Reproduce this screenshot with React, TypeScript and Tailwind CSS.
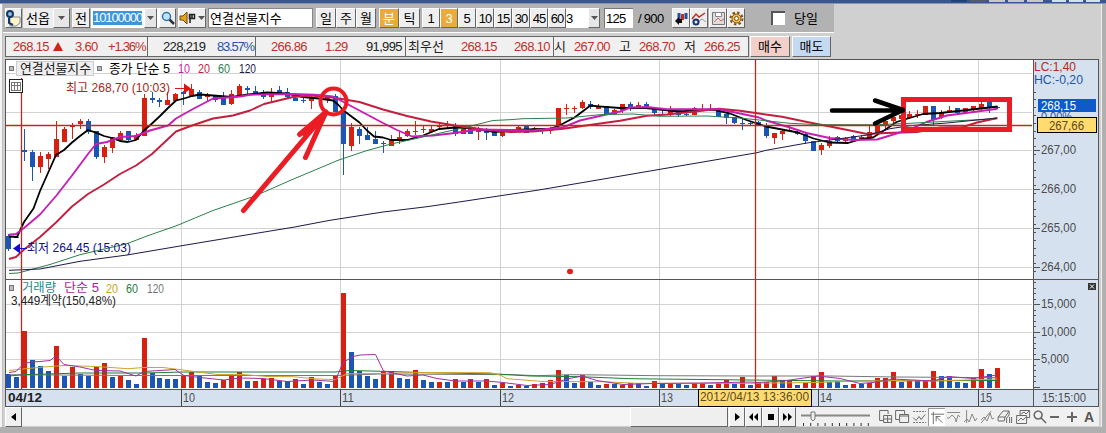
import React from "react";

type Candle = [string, number, number, number, number];

// [color, high, body top, body bottom, low], in thirds of a pixel below the pane header
const candles: Candle[] = [
  ["b", 528, 534, 573, 578], ["b", 537, 537, 538, 538], ["b", 213, 276, 283, 308], ["b", 276, 282, 326, 368], ["r", 283, 294, 326, 344],
  ["r", 282, 289, 303, 332], ["r", 190, 243, 296, 296], ["r", 207, 212, 251, 251], ["r", 195, 204, 208, 243], ["r", 183, 190, 197, 212],
  ["b", 183, 189, 221, 228], ["b", 219, 219, 296, 302], ["r", 261, 267, 296, 314], ["r", 237, 237, 269, 284], ["r", 220, 225, 245, 245],
  ["b", 219, 219, 245, 250], ["r", 226, 232, 245, 245], ["r", 108, 120, 234, 234], ["b", 103, 120, 127, 135], ["b", 120, 125, 132, 146],
  ["r", 103, 126, 140, 140], ["r", 105, 108, 128, 130], ["b", 100, 103, 108, 140], ["r", 78, 92, 114, 114], ["b", 96, 101, 123, 123],
  ["r", 104, 113, 115, 130], ["b", 110, 115, 127, 132], ["b", 102, 118, 140, 140], ["r", 97, 108, 137, 140], ["r", 78, 84, 115, 115],
  ["b", 84, 90, 97, 109], ["b", 85, 98, 104, 108], ["b", 97, 101, 116, 122], ["r", 90, 101, 116, 132], ["b", 84, 97, 104, 106],
  ["b", 91, 101, 116, 120], ["b", 115, 120, 128, 128], ["b", 120, 126, 128, 134], ["r", 115, 120, 128, 152], ["r", 115, 120, 124, 128],
  ["r", 113, 115, 126, 134], ["b", 107, 113, 162, 162], ["b", 150, 158, 258, 350], ["r", 196, 207, 264, 278], ["b", 207, 213, 234, 257],
  ["b", 207, 231, 245, 245], ["b", 219, 243, 258, 258], ["b", 250, 256, 258, 285], ["r", 231, 243, 264, 264], ["r", 223, 237, 245, 257],
  ["r", 213, 219, 234, 238], ["r", 189, 219, 221, 231], ["r", 202, 213, 215, 225], ["r", 202, 213, 222, 226], ["r", 198, 204, 208, 214],
  ["r", 188, 197, 205, 210], ["b", 196, 202, 227, 234], ["r", 205, 207, 227, 227], ["b", 205, 212, 227, 227], ["r", 207, 212, 222, 245],
  ["b", 210, 218, 224, 245], ["b", 215, 219, 234, 234], ["r", 213, 219, 234, 238], ["r", 213, 215, 220, 222], ["r", 200, 206, 216, 216],
  ["b", 200, 203, 225, 225], ["r", 207, 211, 214, 216], ["b", 210, 215, 219, 228], ["r", 207, 212, 219, 228], ["r", 150, 150, 200, 214],
  ["r", 138, 150, 153, 170], ["r", 143, 150, 153, 165], ["r", 126, 132, 151, 152], ["b", 130, 138, 147, 152], ["r", 138, 144, 152, 153],
  ["b", 144, 144, 172, 172], ["r", 152, 156, 169, 170], ["r", 138, 138, 157, 164], ["b", 132, 138, 147, 158], ["r", 132, 142, 150, 152],
  ["b", 132, 138, 152, 152], ["b", 148, 150, 164, 172], ["b", 150, 152, 154, 167], ["r", 144, 156, 170, 174], ["b", 152, 156, 170, 176],
  ["b", 163, 168, 170, 175], ["r", 148, 151, 170, 172], ["r", 138, 152, 154, 155], ["r", 138, 152, 154, 158], ["b", 150, 152, 177, 178],
  ["b", 167, 169, 180, 197], ["b", 176, 178, 196, 197], ["b", 182, 195, 197, 215], ["b", 190, 195, 197, 200], ["b", 190, 192, 202, 203],
  ["b", 194, 203, 234, 239], ["r", 224, 226, 241, 258], ["r", 213, 219, 228, 245], ["r", 205, 217, 219, 220], ["b", 212, 221, 228, 230],
  ["b", 222, 227, 250, 258], ["b", 249, 249, 278, 278], ["r", 255, 262, 277, 291], ["r", 233, 248, 263, 270], ["b", 235, 238, 250, 255],
  ["r", 238, 240, 250, 252], ["b", 230, 234, 245, 247], ["r", 232, 238, 245, 247], ["r", 205, 221, 240, 242], ["r", 196, 203, 227, 228],
  ["r", 177, 190, 202, 215], ["r", 170, 176, 190, 205], ["r", 165, 172, 184, 190], ["r", 160, 168, 180, 184], ["r", 155, 168, 170, 180],
  ["r", 144, 144, 170, 170], ["b", 144, 144, 186, 202], ["r", 156, 162, 178, 182], ["r", 143, 155, 158, 166], ["b", 150, 150, 164, 168],
  ["r", 150, 150, 164, 165], ["r", 144, 144, 157, 160], ["r", 130, 138, 152, 155], ["b", 132, 132, 147, 165], ["b", 144, 146, 148, 152],
];

// bar tops, same unit, the base line is at 339
const volumes =
  "b297 b306 r168 b255 b272 b288 r213 b302 r276 b296 b303 r276 r264 b306 r303 b315 b327 r189 b293 b309 b312 b312 r303 r290 b303 " +
  "b321 b324 r315 r303 r291 b318 r318 r312 r309 b318 b318 r313 b327 r306 b320 b327 r303 r54 b231 b288 b303 b312 r288 r288 b309 " +
  "b312 r286 b315 b321 r321 b321 r313 b322 r312 b320 r312 b330 r324 b333 r330 b333 r327 r324 r315 r285 b300 b323 r300 b320 b330 " +
  "r327 b327 r330 r324 b325 b333 r318 b327 r326 b327 b330 r325 r324 b329 r324 r315 b327 r307 b330 r321 r321 r303 b315 r315 b330 " +
  "r323 r303 r291 b320 b319 b330 r327 b327 r324 r309 r309 r291 b321 r319 b319 r319 r288 b303 b303 b320 b324 r309 r282 b297 r279";

const ma = {
  ma5: "9,236.5 17,237 24,222 33.5,208.5 40,191 48,173 56,155 64,150 72,142.5 80,136 88,130 96,132.7 104,136 112,138 120,141 128,142 136,140 144,130.5 152,123.5 160,116 168,108 176,100.5 184,98.5 192,96 200,94.5 213,95.5 232,97 248,94.5 267,92.5 287,93.5 303,97 319,98.5 333,100.5 338,104.5 343.5,110.5 359.5,122.5 367,130.5 374,136.5 383,137.5 391,140 407,140 423,135.5 439,129 455,127.5 471,128 495,132 520,129.7 550.5,128.7 558.5,126 574.5,117.5 590.5,105.5 598.5,106.3 620,108 646,108 678.5,111.5 713,109.5 730,113.5 746.5,120 757,123.5 766,126.5 782,129.5 798,132.5 813.5,138.5 829.5,142.5 848,143 861.5,139 873,137.5 885.5,129.5 896.5,122 909.5,118 923,114 940,113 963,110.5 989.5,107.5 997.5,106.5",
  ma10: "9,234.7 16,234 24,228 40,214.5 56,196 72,175.5 88,154 96,144 107,142 120,137 136,136 150,130.5 168,125.5 176,118.5 192,109.5 213,98.5 240,96.5 250,94.7 293,94 315,94.7 333,96.5 343.5,102 359.5,110.5 383,123 397,130 412,136.5 433,135.5 455,133 477,129.5 510,130 533,130.5 563,127.3 580,120.5 603,115.3 620,111.5 630.5,107.5 647,107 667,109.3 719,109.3 740,113.5 759,117.5 766,120.5 790,127.5 806.5,133 829.5,138 853,140 877,139.5 890,135.5 909.5,129.5 926.5,122 947,115.5 973.5,112 997.5,108.7",
  ma20: "9,259 16,257 24,249.5 40,237 56,222.5 72,206.5 88,194 104,184.5 120,174 136,165.5 152,154 176,131.5 192,125.5 213,118.5 233,115.5 250,110.5 264,104 293,97 311,95.5 333,97.5 359.5,102 383,109.5 407,116 431,121.5 455,125.5 483,129.5 510,132 533,131.5 563,128.7 593,124.5 620,120.7 647,115.7 667,114.5 695,111.5 719,108.7 740,110.7 759,113.5 782,116.7 807,122 830,126.5 850,130.5 867,134 886,133 917,132 940,127.5 963,127 977,122.5 997.5,118",
  ma60: "9,273.5 18,273 50,264.5 80,254.7 127,243.7 147,236 177,225.5 213,210.5 252,197 267,190.7 290,180.5 338,160.3 367,150.5 391,144 423,137 455,129.7 471,126 493,120.5 510,119.7 523,118.7 567,118 600,114.7 633,114 660,116.3 707,116 740,118 759,120 790,123.3 820,124.7 877,124.7 910,123.3 947,121.3 997,118.7",
  ma120: "9,270.3 40,269 80,261.3 127,255 180,246 260,232.7 293,227.3 330,220.3 383,212 427,206.7 457,202.3 510,194.3 537,190.3 580,183 660,169.3 707,161.3 757,152.7 766,150.3 807,143 840,138.7 870,134.7 890,128.7 910,125.7 947,123 997,118",
};

const vma = {
  v5: "9,372.5 16,371.5 24,363.5 32,362 40,361.5 50,360.5 56,356 64,364.5 80,367 96,370.5 120,371 136,376 144,371.5 175,369.5 184,375.5 200,377.5 224,380 240,378 263,378.5 287,381.5 313,380 335,381.5 343,362.5 353,356.5 360,355 375.5,354.5 383.5,371 407,376 423,375 437,378.5 455,381 487,381 503,382.5 527,385.5 550,384.5 567,379 582,376 597,380.5 623,384.5 653,383.5 703,383 750,382 758,382.5 783,381 818,376 840,378.5 860,383.5 873,382.5 893,379 933,381 948,376.5 973,378.5 997,375",
  v20: "9,370.5 23,369 47,366.7 64,365.5 96,366.5 128,368.7 144,367.5 163,367.5 187,370.5 217,374.5 243,374.5 267,376.5 293,376.7 313,378.7 335,379.7 347,373.7 380,373.5 420,372.5 490,372.7 500,375 507,378.7 543,381.5 603,381.7 637,383.3 750,383.3 813,382.5 840,381.7 893,380.5 933,381 997,379",
  v60: "9,376 24,374.7 80,373 144,373 184,372 335,372 350,370.5 390,371.5 420,372.5 497,374 530,376 580,376.7 630,378.7 720,379.7 840,381 997,380.5",
  v120: "9,374.7 133,375.5 337,375.5 380,374 513,374.7 537,375.7 570,374.7 603,375 657,375.7 750,376 830,376 897,377 997,377.7",
};

const RED = "#d62010";
const BLUE = "#1b56b5";
const barX = (i: number) => Math.round(24.4 + 7.975 * (i - 2) - 2.5);
const py = (v: number) => Math.round(58 + v / 3);

interface LabelProps {
  x: number;
  y: number;
  w: number;
  fill?: string;
  size?: number;
  bold?: boolean;
  children: string;
}

const Label = ({ x, y, w, fill = "#222", size = 13, bold, children }: LabelProps) => (
  <text x={x} y={y} textLength={w} lengthAdjust="spacingAndGlyphs" fill={fill} fontSize={size} fontWeight={bold ? 700 : 400}>
    {children}
  </text>
);

const Btn = ({ className = "", children }: { className?: string; children?: React.ReactNode }) => (
  <div className={`flex h-[20px] shrink-0 items-center justify-center border border-t-white border-l-white border-r-[#666] border-b-[#666] ${className}`}>
    {children}
  </div>
);

const Down = () => (
  <svg width="7" height="4" viewBox="0 0 7 4"><path d="M0 0h7L3.5 4z" fill="#555" /></svg>
);

const Plot = () => (
  <svg width="1028" height="330" viewBox="5 59 1028 330" className="block bg-white">
    <g stroke="#d2d2d2" shapeRendering="crispEdges">
      {[73.5, 112.5, 150.5, 189.5, 228.5, 267.5, 304.5, 332.5, 359.5].map((y) => <line key={y} x1="6" x2="1032" y1={y} y2={y} />)}
      {[181.5, 340.5, 500.5, 659.5, 818.5, 978.5].map((x) => <line key={x} x1={x} x2={x} y1="60" y2="389" />)}
    </g>

    <g shapeRendering="crispEdges">
      {candles.map(([c, hi, top, bottom, lo], i) => (
        <g key={i} fill={c === "r" ? RED : BLUE}>
          <rect x={barX(i) + 2} y={py(hi)} width="1" height={Math.max(1, py(lo) - py(hi))} />
          <rect x={barX(i)} y={py(top)} width="5" height={Math.max(1, py(bottom) - py(top))} />
        </g>
      ))}
      {volumes.split(" ").map((v, i) => {
        const h = Math.round((339 - Number(v.slice(1))) / 3);
        return <rect key={i} x={barX(i)} y={388 - h} width="5" height={h} fill={v[0] === "r" ? RED : BLUE} />;
      })}
    </g>

    <g fill="none" strokeLinejoin="round">
      <polyline points={ma.ma5} stroke="#000" strokeWidth="1.8" />
      <polyline points={ma.ma20} stroke="#c41e3f" strokeWidth="1.9" />
      <polyline points={ma.ma10} stroke="#c81eb4" strokeWidth="1.9" />
      <polyline points={ma.ma60} stroke="#2c7f4c" />
      <polyline points={ma.ma120} stroke="#1c1a4a" />
      <polyline points={vma.v120} stroke="#777" />
      <polyline points={vma.v60} stroke="#1f7d3c" />
      <polyline points={vma.v20} stroke="#cda52b" />
      <polyline points={vma.v5} stroke="#a030a0" />
    </g>

    {/* cursor and base price */}
    <g fill="none" stroke="#c0281c" strokeWidth="1.3">
      <polyline points="21.5,78 21.5,389" />
      <polyline points="6,125.5 1032,125.5" />
      <polyline points="755.5,60 755.5,389" />
    </g>
    <g fill="#555">
      <rect x="5" y="59" width="1" height="330" />
      <rect x="5" y="59" width="1028" height="1" />
      <rect x="5" y="279" width="1028" height="1" />
    </g>

    <g fill="#bbb" stroke="#777" shapeRendering="crispEdges">
      <rect x="9.5" y="66.5" width="4" height="4" />
      <rect x="97.5" y="66.5" width="4" height="4" />
      <rect x="9.5" y="285.5" width="4" height="5" />
      <rect x="16.5" y="61.5" width="77" height="14" fill="#eee" stroke="#ccc" />
    </g>
    <Label x={20} y={73} w={71}>연결선물지수</Label>
    <Label x={109} y={73} w={61} fill="#000">종가 단순 5</Label>
    <Label x={178} y={73} w={12} fill="#c81eb4">10</Label>
    <Label x={198} y={73} w={12} fill="#c41e3f">20</Label>
    <Label x={218} y={73} w={12} fill="#2c7f4c">60</Label>
    <Label x={239} y={73} w={17} fill="#1c1a4a">120</Label>
    <g stroke="#222" fill="#fff" shapeRendering="crispEdges">
      <rect x="9.5" y="79.5" width="13" height="13" />
      <path d="M11.5 82.5h9v8h-9zM11.5 85.5h9M14.5 82.5v8M17.5 82.5v8" stroke="#777" />
    </g>
    <Label x={66} y={92} w={104} fill="#b02318">최고 268,70 (10:03)</Label>
    <path d="M175 88.5h10" stroke="#d81818" />
    <path d="M184 83.5l7 5-7 5z" fill="#e01010" />
    <Label x={27} y={252} w={104} fill="#10108c">최저 264,45 (15:03)</Label>
    <path d="M19 248.5h8" stroke="#1010c0" />
    <path d="M20 243.5l-7 5 7 5z" fill="#1010c0" />

    <Label x={22} y={292} w={34} fill="#2a8588" size={12}>거래량</Label>
    <Label x={64} y={292} w={35} fill="#a81e9c" size={12}>단순 5</Label>
    <Label x={106} y={293} w={12} fill="#c8a422">20</Label>
    <Label x={126} y={293} w={12} fill="#1f7d3c">60</Label>
    <Label x={147} y={293} w={17} fill="#777">120</Label>
    <Label x={11} y={305} w={105} size={12}>3,449계약(150,48%)</Label>

    {/* hand-drawn marks */}
    <g fill="none" stroke="#ec1c24" strokeLinecap="round" strokeLinejoin="round">
      <circle cx="333.5" cy="101.5" r="13" strokeWidth="4" />
      <path d="M243.5 210.5L326 113" strokeWidth="5" />
      <path d="M299.5 134.5L326 112L305.5 157.5" strokeWidth="5" />
      <path d="M304 134L325 114L312 142" strokeWidth="4" />
      <rect x="903.5" y="99.5" width="106" height="30" strokeWidth="5" strokeLinejoin="miter" />
    </g>
    <ellipse cx="570" cy="271.5" rx="3" ry="2.7" fill="#e02020" />
    <path d="M832 110.5H903M875 100.5L903 110L875 123.5" fill="none" stroke="#000" strokeWidth="4.5" strokeLinecap="round" strokeLinejoin="round" />
  </svg>
);

const Axis = () => (
  <svg width="66" height="330" viewBox="1033 59 66 330" className="block bg-[#d6e1ef]">
    <g stroke="#555" shapeRendering="crispEdges">
      <path d="M1033 59.5h66M1033 279.5h66M1033.5 59v330M1098.5 59v330" fill="none" />
      {Array.from({ length: 24 }, (_, i) => <line key={i} x1="1034" x2="1036" y1={92 + i * 7.8} y2={92 + i * 7.8} />)}
      {Array.from({ length: 20 }, (_, i) => <line key={i} x1="1034" x2="1036" y1={282.5 + i * 5.5} y2={282.5 + i * 5.5} />)}
      {[150.5, 189.5, 228.5, 267.5, 304.5, 332.5, 359.5, 387.5].map((y) => <line key={y} x1="1034" x2="1040" y1={y} y2={y} />)}
    </g>
    <Label x={1034} y={71} w={42} fill="#b8281e" size={12}>LC:1,40</Label>
    <Label x={1034} y={84} w={49} fill="#1b56a5" size={12}>HC:-0,20</Label>
    <Label x={1041} y={121} w={31} fill="#1b56a5" size={12}>0,00%</Label>
    <rect x="1038" y="99" width="58" height="13" fill="#1059c8" />
    <Label x={1041} y={110} w={35} fill="#fff" size={12}>268,15</Label>
    <rect x="1037.5" y="117.5" width="59" height="15" fill="#ffdb70" stroke="#000" />
    <Label x={1049} y={130} w={35} fill="#5a4a20">267,66</Label>
    {["267,00", "266,00", "265,00", "264,00"].map((t, i) => (
      <Label key={t} x={1041} y={154 + i * 39} w={35} fill="#4c4c4c">{t}</Label>
    ))}
    <Label x={1041} y={308} w={35} fill="#4c4c4c">15,000</Label>
    <Label x={1041} y={336} w={35} fill="#4c4c4c">10,000</Label>
    <Label x={1041} y={363} w={28} fill="#4c4c4c">5,000</Label>
    <rect x="1088" y="283" width="8" height="7" fill="#333" />
    <path d="M1090 284.5l4 4M1094 284.5l-4 4" stroke="#fff" />
  </svg>
);

const hours: [string, number][] = [["10", 181], ["11", 340], ["12", 500], ["13", 659], ["14", 818], ["15", 978]];

const TimeAxis = () => (
  <svg width="1094" height="18" viewBox="5 389 1094 18" className="block bg-[#d6e1ef]">
    <path d="M5 389.5h1094M5 406.5h1094M5.5 389v18M1033.5 389v18M1098.5 389v18" stroke="#555" shapeRendering="crispEdges" />
    <Label x={8} y={402} w={34} bold>04/12</Label>
    {hours.map(([h, x]) => (
      <g key={h}>
        <path d={`M${x + 0.5} 389v17`} stroke="#444" shapeRendering="crispEdges" />
        <Label x={x + 2} y={402} w={12} fill="#4c4c4c">{h}</Label>
      </g>
    ))}
    <rect x="698.5" y="389.5" width="113" height="17" fill="#ffdb70" stroke="#000" />
    <Label x={700} y={401} w={109} fill="#5a4a20">2012/04/13 13:36:00</Label>
    <Label x={1042} y={402} w={44} fill="#4c4c4c">15:15:00</Label>
  </svg>
);

// one drawing per tool, each on a 17px cell
const tools = [
  "M12 6V2.500H3.500v10H7M7.500 7.500h8v7h-8zM11.500 7.500v7M7.500 11h8",
  "M6.500 11.500h-4v-9h9v4M6.500 6.500h9v8h-9zM6.500 8h9",
  "M2 9.500l3 3 3-4 2 3 4-5",
  "M4.500 3v13M2 5.500h14M7 8h5M7.500 8v5M8 8.500l6 6",
  "M2 4.500h13M2 10h2l3-3 3 3 1 4 2-7 2 2",
  "M4.500 2v13M2 14l3-3 2 3 3-8 3 7 2-3",
  "M2 15L12 3M2 12l3-3 3 4 3-8 2 6 2-1",
  "M2 9l5-6h6l-4 6zM2 9v4h6l1-4M13 3v4l-3 4M10.500 11v4M13.500 9v6M15.500 9v6",
  "M6 7V2.500h9.500v7H13M7 6l3-2 2 2 3-3M2.500 7.500h10v8h-10zM4 13l3-3 2 2 3-3",
  "M7 3a4 4 0 1 0 .1 0M10 10l5 5",
];

const Footer = () => (
  <div className="flex h-[19px] w-[1094px] items-center bg-[#f0f0f0]">
    <Btn className="h-[17px] w-[17px] bg-[#f0f0f0]"><svg width="5" height="8"><path d="M5 0v8L0 4z" /></svg></Btn>
    <div className="h-[17px] w-[610px] bg-[#f5f5f5]" />
    <Btn className="h-[17px] w-[98px] bg-[#efefef]" />
    <Btn className="ml-px h-[17px] w-[16px] bg-[#f0f0f0]"><svg width="5" height="8"><path d="M0 0v8l5-4z" /></svg></Btn>
    <Btn className="h-[17px] w-[17px] bg-[#f0f0f0]"><svg width="9" height="8"><path d="M4 0v8L0 4zM9 0v8L5 4z" /></svg></Btn>
    <Btn className="h-[17px] w-[17px] bg-[#f0f0f0]"><svg width="6" height="6"><path d="M0 0h6v6H0z" /></svg></Btn>
    <Btn className="h-[17px] w-[17px] bg-[#f0f0f0]"><svg width="9" height="8"><path d="M0 0v8l4-4zM5 0v8l4-4z" /></svg></Btn>
    <svg width="76" height="18" className="shrink-0">
      <path d="M5 7.5h69" stroke="#888" strokeWidth="2" />
      <path d="M15 4h4v7l-2 2-2-2z" fill="#eee" stroke="#777" />
      {Array.from({ length: 10 }, (_, i) => <path key={i} d={`M${7.5 + i * 7.2} 15v3`} stroke="#333" />)}
    </svg>
    <div className="ml-[4px] flex">
      {tools.map((d, i) => (
        <svg key={d} width="17.2" height="18" viewBox="0 0 17 18" className={i === 3 ? "border-t border-l border-[#999] bg-white" : ""}>
          {i === 2 && <path d="M2 3.5h13M2 14.5h13" stroke="#777" strokeDasharray="2 1" />}
          <path d={d} fill="none" stroke={i > 3 && i < 7 ? "#888" : "#6a6a6a"} strokeWidth={i === 9 ? 1.6 : 1} />
        </svg>
      ))}
      <svg width="51" height="18" fill="none" stroke="#666" strokeWidth="2">
        <path d="M2 9h9M19 9h10M24 4v10" />
        <text x="36" y="14" fontSize="14" fontWeight="700" fill="#555" stroke="none">A</text>
      </svg>
    </div>
  </div>
);

const Toolbar = () => (
  <div className="flex h-[29px] w-[831px] items-center border-b border-white bg-[#b2b2b2] pl-[2px] text-[13px] leading-none">
    <Btn className="w-[17px] bg-[#eee]">
      <svg width="15" height="17">
        <path d="M4 7h10v6l-4 3H4z" fill="#fff5c8" stroke="#888" />
        <circle cx="4" cy="4" r="3" fill="#9bd" stroke="#123a66" strokeWidth="2" />
        <path d="M3 8v5l4 2" fill="none" stroke="#123a66" strokeWidth="2" />
      </svg>
    </Btn>
    <div className="ml-px flex h-[20px] w-[47px] items-center justify-between bg-[#eee] pl-[3px]">
      선옵<Btn className="h-[17px] w-[17px] bg-[#e6e6e6]"><Down /></Btn>
    </div>
    <Btn className="ml-[2px] w-[18px] bg-[#eee]">전</Btn>
    <div className="ml-px flex h-[20px] w-[68px] items-center bg-white pl-[2px]">
      <span className="h-[14px] w-[49px] overflow-hidden bg-[#3c96dc] text-[13px] leading-[14px] tracking-[-1.1px] text-white">10100000</span>
      <Btn className="ml-[2px] h-[17px] w-[13px] bg-[#e6e6e6]"><Down /></Btn>
    </div>
    <Btn className="w-[17px] bg-[#eee]">
      <svg width="14" height="14">
        <path d="M8 8l5 5" stroke="#333" strokeWidth="2.5" />
        <circle cx="5.5" cy="5.5" r="4" fill="#bfe3fa" stroke="#3274ac" strokeWidth="1.5" />
      </svg>
    </Btn>
    <Btn className="ml-[2px] w-[28px] gap-px bg-[#eee]">
      <svg width="18" height="14">
        <path d="M1 5h3l4-4v12L4 9H1z" fill="#e5a420" stroke="#6b4a10" />
        <path d="M10.5 3.5h5v4h-5zM13 4v4M11 4v8" fill="none" stroke="#222" strokeWidth="1.5" />
      </svg>
      <Down />
    </Btn>
    <div className="ml-[2px] flex h-[20px] w-[105px] items-center border border-[#888] bg-white pl-px">연결선물지수</div>
    <Btn className="ml-[3px] w-[20px] bg-[#eee]">일</Btn>
    <Btn className="w-[20px] bg-[#eee]">주</Btn>
    <Btn className="w-[20px] bg-[#eee]">월</Btn>
    <Btn className="ml-[3px] w-[20px] bg-[#e9ac3c] text-white">분</Btn>
    <Btn className="w-[21px] bg-[#eee]">틱</Btn>
    <Btn className="ml-[2px] w-[18px] bg-[#eee]">1</Btn>
    <Btn className="w-[18px] bg-[#e9ac3c] text-white">3</Btn>
    <Btn className="w-[18px] bg-[#eee]">5</Btn>
    {["10", "15", "30", "45", "60"].map((m) => (
      <Btn key={m} className="w-[18px] bg-[#eee] tracking-[-1px]">{m}</Btn>
    ))}
    <div className="flex h-[20px] w-[34px] items-center justify-between bg-white">
      3<Btn className="h-[19px] w-[12px] bg-[#e6e6e6]"><Down /></Btn>
    </div>
    <div className="ml-[4px] flex h-[20px] w-[29px] items-center border-t border-l border-[#777] bg-white pl-px tracking-[-0.7px]">125</div>
    <span className="ml-[5px] w-[34px] whitespace-nowrap tracking-[-0.7px]">/ 900</span>
    <Btn className="w-[18px] bg-[#eee]">
      <svg width="15" height="14">
        <path d="M7 3h3v6H7z" fill="#c22c20" />
        <path d="M5 2v6M12 2v6" stroke="#234fa0" strokeWidth="3" />
        <path d="M1 10l4-4v2h3v4H5v2z" fill="#111" />
      </svg>
    </Btn>
    <Btn className="w-[18px] bg-[#eee]">
      <svg width="16" height="15" fill="none">
        <path d="M1 8l4-5 3 3 6-4" stroke="#c22c20" strokeWidth="1.5" />
        <path d="M8 10l3-2 4 3" stroke="#999" />
        <circle cx="5" cy="11" r="2.5" stroke="#15356b" strokeWidth="2" />
      </svg>
    </Btn>
    <Btn className="ml-px w-[18px] bg-[#eee]">
      <svg width="15" height="15" fill="none">
        <path d="M1.5 1.5h12v12h-12z" fill="#ddd" stroke="#777" />
        <path d="M4.5 1.5h6v4h-6z" fill="#fff" stroke="#888" />
        <path d="M3 11l4-4 3 3 3-2" stroke="#c66" />
      </svg>
    </Btn>
    <Btn className="w-[18px] bg-[#eee]">
      <svg width="15" height="15" fill="none">
        <circle cx="7.5" cy="7.5" r="6" stroke="#7a5110" strokeWidth="2" strokeDasharray="2.4 2.3" />
        <circle cx="7.5" cy="7.5" r="4.5" fill="#f2bd50" stroke="#7a5110" />
        <circle cx="7.5" cy="7.5" r="2" fill="#fff" stroke="#7a5110" />
      </svg>
    </Btn>
    <div className="ml-[26px] h-[14px] w-[14px] border-t-2 border-l-2 border-[#555] bg-white" />
    <span className="ml-[9px]">당일</span>
  </div>
);

const Num = ({ className = "tracking-[-0.65px]", children }: { className?: string; children: string }) => (
  <span className={`shrink-0 whitespace-nowrap ${className}`}>{children}</span>
);

const Quotes = () => (
  <div className="mt-[3px] flex h-[21px] text-[13px] leading-none tracking-[-0.65px] text-[#222]">
    <div className="flex w-[744px] items-center border border-[#666] bg-[#f0f0f0]">
      <div className="flex h-full w-[142px] items-center border-r border-[#666] pl-[7px] text-[#c03028]">
        <Num className="w-[40px]">268.15</Num>
        <svg width="10" height="9"><path d="M5 0l5 9H0z" fill="#d02418" /></svg>
        <Num className="ml-[12px] w-[33px]">3.60</Num>
        <Num className="tracking-[-1.2px]">+1.36%</Num>
      </div>
      <div className="flex h-full w-[108px] items-center border-r border-[#666] pl-[15px]">
        <Num className="w-[54px]">228,219</Num>
        <Num className="tracking-[-1.2px] text-[#2850a8]">83.57%</Num>
      </div>
      <div className="flex h-full w-[150px] items-center border-r border-[#666] pl-[15px]">
        <Num className="w-[54px] text-[#c03028]">266.86</Num>
        <Num className="w-[41px] text-[#c03028]">1.29</Num>
        <Num>91,995</Num>
      </div>
      <div className="flex h-full w-[148px] items-center border-r border-[#666] pl-[2px]">
        <Num className="w-[53px] tracking-normal">최우선</Num>
        <Num className="w-[53px] text-[#c03028]">268.15</Num>
        <Num className="text-[#c03028]">268.10</Num>
      </div>
      <Num className="w-[20px]">시</Num>
      <Num className="w-[45px] text-[#c03028]">267.00</Num>
      <Num className="w-[20px]">고</Num>
      <Num className="w-[45px] text-[#c03028]">268.70</Num>
      <Num className="w-[20px]">저</Num>
      <Num className="text-[#c03028]">266.25</Num>
    </div>
    <Btn className="ml-px h-[21px] w-[40px] bg-[#f3cfca] tracking-normal text-black">매수</Btn>
    <Btn className="ml-[2px] h-[21px] w-[39px] bg-[#c4daf2] tracking-normal text-black">매도</Btn>
  </div>
);

const App = () => {
  return (
    <div className="flex h-[433px] w-[1106px] flex-col overflow-hidden bg-[#d0d0d0] font-['Liberation_Sans','Noto_Sans_CJK_KR',sans-serif] text-black">
      <div className="flex h-[4px] shrink-0 justify-end gap-[3px] border-b border-[#8a94a8] bg-[#3a5690] pr-[6px]">
        <div className="h-[2px] w-[16px] bg-[#203f7d]" />
        <div className="h-[2px] w-[16px] bg-[#555a70]" />
        <div className="h-[2px] w-[16px] bg-[#c8c8c8]" />
        <div className="h-[2px] w-[16px] bg-[#c8c8c8]" />
        <div className="mr-[6px] h-[2px] w-[16px] bg-[#c8c8c8]" />
        <div className="h-[2px] w-[14px] bg-[#cfe4ee]" />
        <div className="h-[2px] w-[14px] bg-[#cfe4ee]" />
        <div className="h-[2px] w-[14px] bg-[#cfe4ee]" />
      </div>
      <div className="flex h-[423px] shrink-0">
        <div className="w-[3px] border-r border-[#c0c0c0] bg-[#f4f4f4]" />
        <div className="w-[1098px]">
          <Toolbar />
          <div className="pl-[2px]">
            <Quotes />
            <div className="mt-[2px] flex">
              <Plot />
              <Axis />
            </div>
            <TimeAxis />
            <Footer />
          </div>
        </div>
        <div className="w-[5px] border-l border-[#eee] bg-[#b0b0b0]" />
      </div>
      <div className="h-[6px] shrink-0 bg-[#b0b0b0]" />
    </div>
  );
};

export default App;
